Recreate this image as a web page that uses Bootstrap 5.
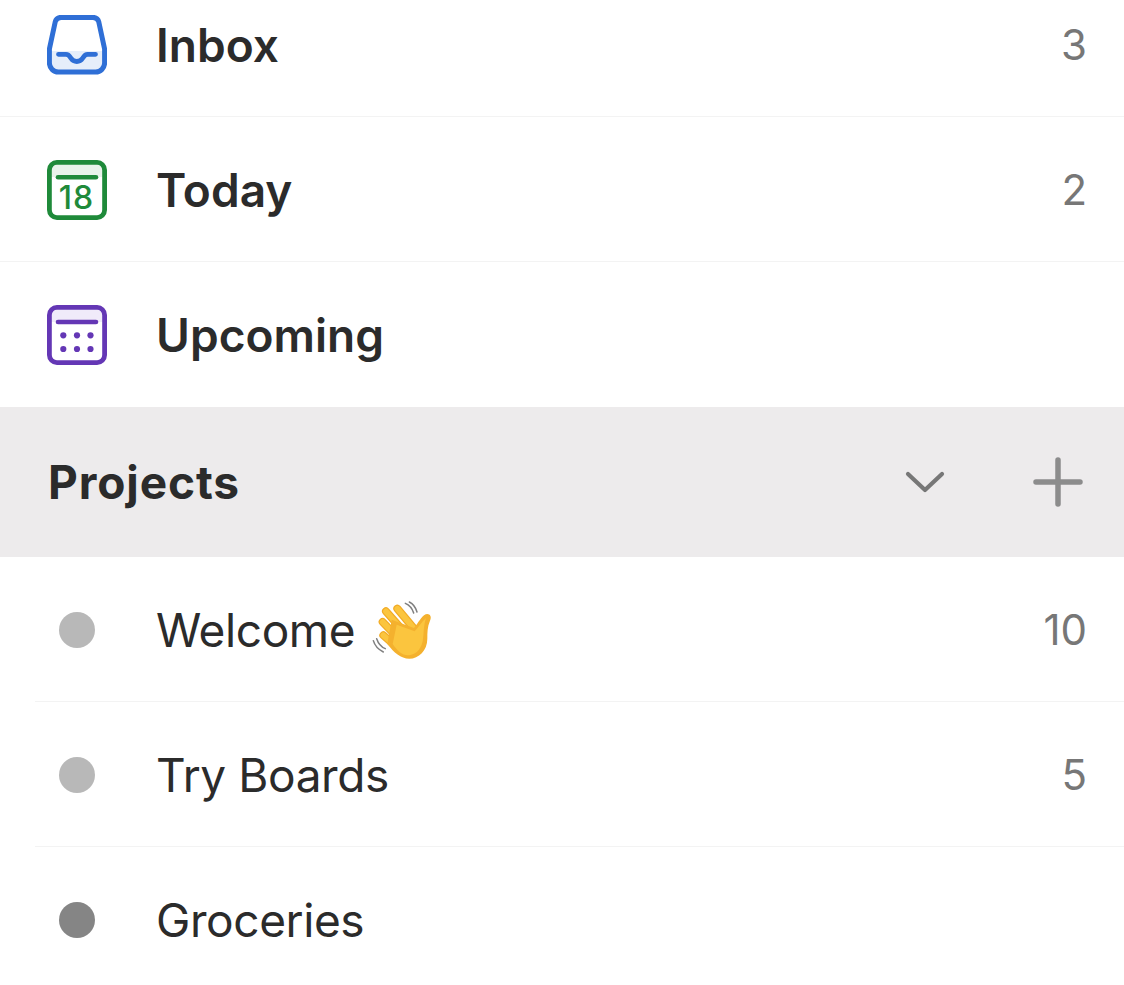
<!DOCTYPE html>
<html lang="en">
<head>
<meta charset="utf-8">
<title>Projects</title>
<link href="https://cdn.jsdelivr.net/npm/bootstrap@5.3.0/dist/css/bootstrap.min.css" rel="stylesheet">
<style>
html,body{height:985px;overflow:hidden;background:#fff}
body{font-family:Inter,"Liberation Sans",sans-serif;color:#2b2b2b}
.nav-list{margin-top:-28px}
.nav-row{height:145px;padding:2px 37px 0 47px;border-bottom:1px solid #f3f3f3}
.nav-row:last-child{border-bottom:0;padding-top:0}
.nav-row .row-ico{width:60px;height:60px;margin-right:50px;flex:none;display:block}
.row-title{font-size:46px;font-weight:600;letter-spacing:.05px;line-height:1;margin-left:-1px}
.row-count{font-size:42px;color:#777;line-height:1;font-weight:400}
.section-bar{height:150px;background:#edebec;padding:0 41px 0 48px}
.section-title{font-size:46px;font-weight:700;letter-spacing:.9px;line-height:1}
.section-tools{gap:88px}
.proj-list{margin-left:35px}
.proj-row{height:145px;padding:2px 37px 0 24px;border-bottom:1px solid #f3f3f3}
.proj-row:last-child{border-bottom:0;padding-top:0}
.proj-dot{width:36px;height:36px;border-radius:50%;background:#b8b8b8;margin-right:62px;flex:none}
.proj-dot.dark{background:#858585}
.proj-name{font-size:46px;font-weight:400;letter-spacing:-.4px;line-height:1;margin-left:-1px}
.wave{margin-left:15px;display:block}
</style>
</head>
<body>
<main>
<div class="nav-list">
  <div class="nav-row d-flex align-items-center">
    <svg class="row-ico" viewBox="0 0 60 60" fill="none">
      <path d="M2.5 36H57.5V48a9 9 0 0 1-9 9H11.5a9 9 0 0 1-9-9Z" fill="#e6eefa"/>
      <path d="M14 2.4H46a6 6 0 0 1 5.8 4.5L57.6 34V48a9 9 0 0 1-9 9H11.4a9 9 0 0 1-9-9V34L8.2 6.9A6 6 0 0 1 14 2.4Z" stroke="#2f6fd6" stroke-width="5" stroke-linejoin="round"/>
      <path d="M11.5 39.3H19c3 0 3.5 1.6 5 4c1.3 2 3.2 3.2 5.8 3.2s4.5-1.2 5.8-3.2c1.5-2.4 2-4 5-4H48.5" stroke="#2f6fd6" stroke-width="4.8" stroke-linecap="round" stroke-linejoin="round"/>
    </svg>
    <span class="row-title flex-grow-1">Inbox</span>
    <span class="row-count">3</span>
  </div>
  <div class="nav-row d-flex align-items-center">
    <svg class="row-ico" viewBox="0 0 60 60" fill="none">
      <path d="M3 10a7 7 0 0 1 7-7H50a7 7 0 0 1 7 7V17H3Z" fill="#e8f3ea"/>
      <rect x="2.4" y="2.4" width="55.2" height="55.2" rx="7.5" stroke="#1f8a3a" stroke-width="4.8"/>
      <path d="M11 17.3H49" stroke="#1f8a3a" stroke-width="4.6" stroke-linecap="round"/>
      <text x="29.5" y="48.5" text-anchor="middle" font-family="Inter,sans-serif" font-size="32" font-weight="500" letter-spacing="1" fill="#1f8a3a">18</text>
    </svg>
    <span class="row-title flex-grow-1">Today</span>
    <span class="row-count">2</span>
  </div>
  <div class="nav-row d-flex align-items-center">
    <svg class="row-ico" viewBox="0 0 60 60" fill="none">
      <path d="M3 10a7 7 0 0 1 7-7H50a7 7 0 0 1 7 7V17H3Z" fill="#f0ebfa"/>
      <rect x="2.4" y="2.4" width="55.2" height="55.2" rx="7.5" stroke="#6437b5" stroke-width="4.8"/>
      <path d="M11 17H49" stroke="#6437b5" stroke-width="4.6" stroke-linecap="round"/>
      <g fill="#6437b5">
        <circle cx="16.3" cy="30.3" r="3.1"/><circle cx="30" cy="30.3" r="3.1"/><circle cx="43.5" cy="30.3" r="3.1"/>
        <circle cx="16.3" cy="44" r="3.1"/><circle cx="30" cy="44" r="3.1"/><circle cx="43.5" cy="44" r="3.1"/>
      </g>
    </svg>
    <span class="row-title flex-grow-1">Upcoming</span>
  </div>
</div>
<div class="section-bar d-flex align-items-center justify-content-between">
  <span class="section-title">Projects</span>
  <div class="section-tools d-flex align-items-center">
    <svg width="40" height="22" viewBox="0 0 40 22" fill="none"><path d="M3 3L20 19L37 3" stroke="#777" stroke-width="4.2" stroke-linecap="round" stroke-linejoin="round"/></svg>
    <svg width="50" height="50" viewBox="0 0 50 50" fill="none"><path d="M25 3V47M3 25H47" stroke="#8c8c8c" stroke-width="5.5" stroke-linecap="round"/></svg>
  </div>
</div>
<div class="proj-list">
  <div class="proj-row d-flex align-items-center">
    <span class="proj-dot"></span>
    <span class="proj-name">Welcome</span>
    <svg class="wave" width="64" height="64" viewBox="60 20 192 192" fill="none">
      <g stroke="#555" stroke-width="4.5" stroke-linecap="round" opacity=".75">
        <path d="M166 36c13 5 21 16 25 29"/><path d="M178 32c12 6 19 16 23 30"/>
        <path d="M70 148c4 14 14 26 30 34"/><path d="M80 142c4 12 12 24 26 30"/>
      </g>
      <path d="M108 60L165 125M142 52L192 112M98 92L150 146M100 132L146 172" stroke="#f2ab25" stroke-width="24" stroke-linecap="round"/>
      <path d="M108 60L165 125M142 52L192 112M98 92L150 146M100 132L146 172" stroke="#fbc53e" stroke-width="17" stroke-linecap="round"/>
      <path d="M125 85L192 110C202 100 208 84 222 72C234 62 248 72 240 88C232 106 232 124 232 142C232 178 206 202 178 202C152 202 132 184 112 158Z" fill="#f4b12e"/>
      <path d="M140 100L194 120C206 108 214 92 228 80C220 104 222 126 218 150C212 178 194 192 174 192C156 192 142 178 128 158Z" fill="#fbc53e"/>
    </svg>
    <span class="flex-grow-1"></span>
    <span class="row-count">10</span>
  </div>
  <div class="proj-row d-flex align-items-center">
    <span class="proj-dot"></span>
    <span class="proj-name flex-grow-1">Try Boards</span>
    <span class="row-count">5</span>
  </div>
  <div class="proj-row d-flex align-items-center">
    <span class="proj-dot dark"></span>
    <span class="proj-name flex-grow-1">Groceries</span>
  </div>
</div>
</main>
<script src="https://cdn.jsdelivr.net/npm/bootstrap@5.3.0/dist/js/bootstrap.bundle.min.js"></script>
</body>
</html>
